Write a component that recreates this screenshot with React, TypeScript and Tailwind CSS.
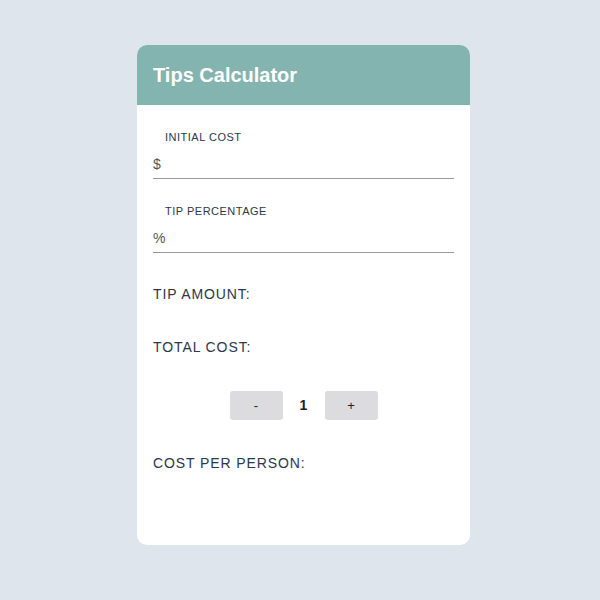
export default function App() {
  return (
    <div
      className="min-h-[600px] w-full bg-[#dfe5ed] flex justify-center pt-[45px] pl-[7px]"
      style={{ fontFamily: '"Liberation Sans", Arial, sans-serif' }}
    >
      <div className="w-[333px] h-[500px] bg-white rounded-[10px] overflow-hidden flex flex-col">
        {/* Header */}
        <div className="h-[60px] bg-[#84b4b0] flex items-center px-4">
          <h1 className="text-[20px] font-bold text-white">Tips Calculator</h1>
        </div>

        {/* Body */}
        <div className="px-4 pt-6 text-[#2d3748]">
          <Field label="INITIAL COST" prefix="$" />
          <div className="mt-[24px]">
            <Field label="TIP PERCENTAGE" prefix="%" />
          </div>

          <p className="mt-[31px] text-[14px] leading-5 tracking-[0.9px]">TIP AMOUNT:</p>
          <p className="mt-[33px] text-[14px] leading-5 tracking-[0.9px]">TOTAL COST:</p>

          <div className="mt-[34px] flex items-center justify-center gap-[20px]">
            <button className="w-[53px] h-[29px] bg-[#dcdbde] rounded-[3px] text-[13px] text-[#222]">-</button>
            <span className="w-[2px] text-[14px] font-bold text-[#222] flex justify-center">1</span>
            <button className="w-[53px] h-[29px] bg-[#dcdbde] rounded-[3px] text-[13px] text-[#222]">+</button>
          </div>

          <p className="mt-[33px] text-[14px] leading-5 tracking-[0.9px]">COST PER PERSON:</p>
        </div>
      </div>
    </div>
  )
}

function Field({ label, prefix }: { label: string; prefix: string }) {
  return (
    <div>
      <p className="pl-3 text-[11px] leading-4 tracking-[0.5px]">{label}</p>
      <div className="mt-2 h-[26px] pb-[2px] border-b border-[#9a9a9a] flex items-center">
        <span className="text-[14px] text-[#555]">{prefix}</span>
        <input className="flex-1 outline-none bg-transparent text-[14px] ml-1" />
      </div>
    </div>
  )
}
